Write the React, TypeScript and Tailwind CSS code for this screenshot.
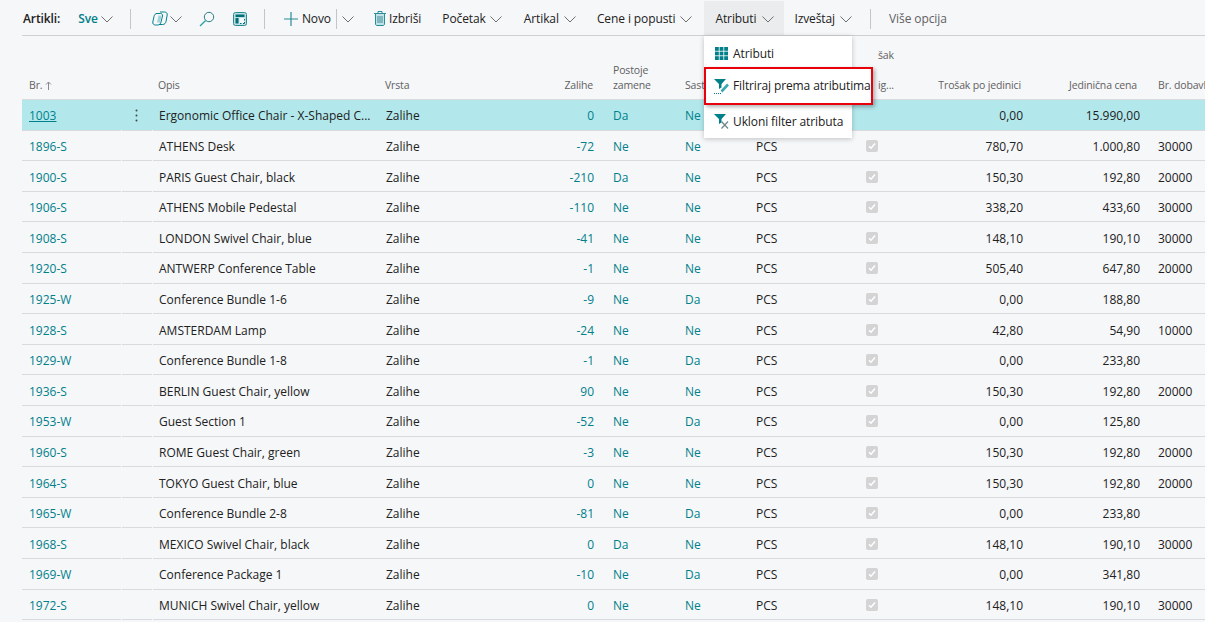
const TEAL = "text-[#00808a]";

type Item = [string, string, string, number, string, string, string, string, string];

const items: Item[] = [
  ["1003", "Ergonomic Office Chair - X-Shaped C...", "Zalihe", 0, "Da", "Ne", "", "0,00", "15.990,00"],
  ["1896-S", "ATHENS Desk", "Zalihe", -72, "Ne", "Ne", "30000", "780,70", "1.000,80"],
  ["1900-S", "PARIS Guest Chair, black", "Zalihe", -210, "Da", "Ne", "20000", "150,30", "192,80"],
  ["1906-S", "ATHENS Mobile Pedestal", "Zalihe", -110, "Ne", "Ne", "30000", "338,20", "433,60"],
  ["1908-S", "LONDON Swivel Chair, blue", "Zalihe", -41, "Ne", "Ne", "30000", "148,10", "190,10"],
  ["1920-S", "ANTWERP Conference Table", "Zalihe", -1, "Ne", "Ne", "20000", "505,40", "647,80"],
  ["1925-W", "Conference Bundle 1-6", "Zalihe", -9, "Ne", "Da", "", "0,00", "188,80"],
  ["1928-S", "AMSTERDAM Lamp", "Zalihe", -24, "Ne", "Ne", "10000", "42,80", "54,90"],
  ["1929-W", "Conference Bundle 1-8", "Zalihe", -1, "Ne", "Da", "", "0,00", "233,80"],
  ["1936-S", "BERLIN Guest Chair, yellow", "Zalihe", 90, "Ne", "Ne", "20000", "150,30", "192,80"],
  ["1953-W", "Guest Section 1", "Zalihe", -52, "Ne", "Da", "", "0,00", "125,80"],
  ["1960-S", "ROME Guest Chair, green", "Zalihe", -3, "Ne", "Ne", "20000", "150,30", "192,80"],
  ["1964-S", "TOKYO Guest Chair, blue", "Zalihe", 0, "Ne", "Ne", "20000", "150,30", "192,80"],
  ["1965-W", "Conference Bundle 2-8", "Zalihe", -81, "Ne", "Da", "", "0,00", "233,80"],
  ["1968-S", "MEXICO Swivel Chair, black", "Zalihe", 0, "Da", "Ne", "30000", "148,10", "190,10"],
  ["1969-W", "Conference Package 1", "Zalihe", -10, "Ne", "Da", "", "0,00", "341,80"],
  ["1972-S", "MUNICH Swivel Chair, yellow", "Zalihe", 0, "Ne", "Ne", "30000", "148,10", "190,10"],
];

function Chev({ className = "" }: { className?: string }) {
  return (
    <svg width="12" height="12" viewBox="0 0 12 12" fill="none" stroke="#6f6f6f" className={`shrink-0 ${className}`}>
      <path d="M0.500 3.500 6 9l5.500-5.500" />
    </svg>
  );
}

function Divider({ className = "" }: { className?: string }) {
  return <div className={`w-px h-[20px] shrink-0 bg-[#c4c5c7] ${className}`} />;
}

function CopilotIcon() {
  return (
    <svg width="16" height="16" viewBox="0 0 16 16" fill="none" stroke="#00808a" className="shrink-0">
      <path d="M5 2.500h3.500a2 2 0 0 1 2 2.500L9 11c-.4 1.800-1.500 3-3.300 3H3.500C1.700 14 .5 12.800 .8 11L2 5.500C2.400 3.600 3.500 2.500 5 2.500Z" />
      <path d="M8 1h4.500c1.800 0 3 1.200 2.700 3L14 10.500c-.4 1.800-1.500 3-3.300 3H7" />
      <path d="M6.500 4.500h3L8 11.500H5Z" fill="#9fd4d8" stroke="none" />
    </svg>
  );
}

function SearchIcon() {
  return (
    <svg width="16" height="16" viewBox="0 0 16 16" fill="none" stroke="#00808a" className="shrink-0">
      <circle cx="10" cy="6" r="4.700" stroke="#2b7f88" />
      <path d="M6.600 9.500 1 15" stroke="#2aa0aa" strokeWidth="1.300" />
    </svg>
  );
}

function LayoutIcon() {
  return (
    <svg width="14" height="14" viewBox="0 0 14 14" fill="none" className="shrink-0">
      <rect x="0.500" y="0.500" width="13" height="13" rx="2" fill="#bfe0e3" stroke="#2b8b94" />
      <rect x="2.500" y="2.500" width="9" height="2.500" fill="#00707a" />
      <rect x="2.500" y="6" width="3" height="5.500" fill="#00707a" />
      <rect x="6.500" y="6" width="5" height="5.500" fill="#f6f7f9" />
      <path d="M7 11.500h1.500M10 11.500h1.500V10M11.500 8.500V7" stroke="#00707a" />
    </svg>
  );
}

function PlusIcon() {
  return (
    <svg width="14" height="14" viewBox="0 0 14 14" stroke="#2a8c96" className="shrink-0">
      <path d="M7 0v14M0 7h14" strokeWidth="1.200" />
    </svg>
  );
}

function TrashIcon() {
  return (
    <svg width="12" height="15" viewBox="0 0 12 15" fill="none" stroke="#2a8c96" className="shrink-0">
      <path d="M0 2.500h12M4 2.500V.5h4v2" />
      <path d="M1.500 2.500h9V13c0 .8-.6 1.500-1.500 1.500H3c-.9 0-1.500-.7-1.500-1.500Z" fill="#bfe3e6" />
      <path d="M4 5v7M6 5v7M8 5v7" stroke="#3f8c94" />
    </svg>
  );
}

function GridIcon() {
  return (
    <svg width="13" height="13" viewBox="0 0 13 13" fill="#00808a" className="shrink-0">
      {[0, 4.600, 9.200].map((x) =>
        [0, 4.600, 9.200].map((y) => <rect key={`${x}-${y}`} x={x} y={y} width="3.800" height="3.800" />),
      )}
    </svg>
  );
}

function FilterEditIcon() {
  return (
    <svg width="17" height="17" viewBox="0 0 17 17" fill="none" className="shrink-0">
      <path d="M1 1h12L8.500 6V9.500L6 11V6Z" fill="#00808a" />
      <path d="M8.500 13.500 15 6.500" stroke="#3aa7b0" strokeWidth="2.600" />
      <path d="M1 15.500h7" stroke="#00808a" strokeDasharray="1 1" />
    </svg>
  );
}

function FilterClearIcon() {
  return (
    <svg width="17" height="17" viewBox="0 0 17 17" fill="none" className="shrink-0">
      <path d="M1 1h12L8.500 6V9.500L6 11V6Z" fill="#00808a" />
      <path d="M8.500 8.500l6.500 7M15 8.500l-6.500 7" stroke="#6d8a90" strokeWidth="1.300" />
    </svg>
  );
}

function Toolbar() {
  return (
    <div className="ml-[22px] mt-px h-[35px] pt-px flex items-center border-b border-[#cfd0d2] whitespace-nowrap tracking-[-0.1px]">
      <span className="ml-px font-semibold">Artikli:</span>
      <span className={`ml-[18px] font-semibold ${TEAL}`}>Sve</span>
      <Chev className="ml-[3px]" />
      <Divider className="ml-[17px]" />
      <div className="ml-[21px] flex items-center"><CopilotIcon /></div>
      <Chev className="ml-[2px]" />
      <div className="ml-[17px] flex items-center"><SearchIcon /></div>
      <div className="ml-[18px] flex items-center"><LayoutIcon /></div>
      <Divider className="ml-[17px]" />
      <div className="ml-[19px] flex items-center"><PlusIcon /></div>
      <span className="ml-[4px]">Novo</span>
      <Divider className="ml-[5px] h-[16px]" />
      <Chev className="ml-[5px]" />
      <div className="ml-[20px] flex items-center"><TrashIcon /></div>
      <span className="ml-[3px]">Izbriši</span>
      <span className="ml-[21px]">Početak</span>
      <Chev className="ml-[4px]" />
      <span className="ml-[22px]">Artikal</span>
      <Chev className="ml-[5px]" />
      <span className="ml-[21px]">Cene i popusti</span>
      <Chev className="ml-[5px]" />
      <div className="ml-[12px] w-[80px] h-[34px] -mt-px self-start bg-[#ebecee] flex items-center pl-[11px] pt-px shrink-0">
        <span>Atributi</span>
        <Chev className="ml-[6px]" />
      </div>
      <span className="ml-[10px]">Izveštaj</span>
      <Chev className="ml-[5px]" />
      <Divider className="ml-[18px]" />
      <span className="ml-[18px] text-[#616161]">Više opcija</span>
    </div>
  );
}

function HeaderRow() {
  return (
    <div className="ml-[22px] h-[64px] flex items-end pb-[6px] text-[10.5px] leading-[15px] tracking-[-0.15px] text-[#616161] border-b border-[#d9dadd] whitespace-nowrap overflow-hidden">
      <div className="w-[130px] shrink-0 pl-[7px] flex items-center gap-[3px]">
        Br.
        <svg width="7" height="9" viewBox="0 0 7 9" fill="none" stroke="#8a8a8a"><path d="M3.500 9V1M1 3.500 3.500 1 6 3.500" /></svg>
      </div>
      <div className="w-[227px] shrink-0 pl-[6px]">Opis</div>
      <div className="w-[120px] shrink-0 pl-[6px]">Vrsta</div>
      <div className="w-[107px] shrink-0 pr-[13px] text-right">Zalihe</div>
      <div className="w-[72px] shrink-0 pl-[7px]">Postoje<br />zamene</div>
      <div className="w-[71px] shrink-0 pl-[7px]">Sast</div>
      <div className="w-[111px] shrink-0" />
      <div className="w-[44px] shrink-0 pl-[18px]">šak<br /><span className="inline-block mt-[15px]">ig...</span></div>
      <div className="w-[125px] shrink-0 pr-[8px] text-right">Trošak po jedinici</div>
      <div className="w-[117px] shrink-0 pr-[9px] text-right">Jedinična cena</div>
      <div className="shrink-0 pl-[12px]">Br. dobavlj</div>
    </div>
  );
}

function Row({ item, first }: { item: Item; first: boolean }) {
  const [no, desc, type, stock, subst, bom, vendor, cost, price] = item;
  return (
    <div className={`relative ml-[22px] h-[30.6px] pt-[3.4px] flex items-center border-b border-[#d9dadd] whitespace-nowrap ${first ? "bg-[#b2e8ec]" : ""}`}>
      <div className="w-[99px] shrink-0 pl-[7px]">
        <span className={`${TEAL} ${first ? "underline" : ""}`}>{no}</span>
      </div>
      <div className="w-[31px] shrink-0 flex justify-center">
        {first && (
          <svg width="3" height="13" viewBox="0 0 3 13" fill="#444" className="-mt-px"><circle cx="1.500" cy="1.500" r="1" /><circle cx="1.500" cy="6.500" r="1" /><circle cx="1.500" cy="11.500" r="1" /></svg>
        )}
      </div>
      <div className="w-[227px] shrink-0 pl-[7px]">{desc}</div>
      <div className="w-[120px] shrink-0 pl-[7px]">{type}</div>
      <div className={`w-[107px] shrink-0 pr-[12px] text-right ${TEAL}`}>{stock}</div>
      <div className={`w-[72px] shrink-0 pl-[7px] ${TEAL}`}>{subst}</div>
      <div className={`w-[71px] shrink-0 pl-[7px] ${TEAL}`}>{bom}</div>
      <div className="w-[111px] shrink-0 pl-[7px]">{first ? "" : "PCS"}</div>
      <div className="w-[44px] shrink-0 pl-[6px] flex">
        {!first && (
          <div className="w-[12px] h-[12px] -mt-[2px] rounded-[2px] bg-[#d4d4d4] flex items-center justify-center">
            <svg width="8" height="8" viewBox="0 0 8 8" fill="none" stroke="#fff" strokeWidth="1.500"><path d="M1 4.200 3 6.200 7 1.500" /></svg>
          </div>
        )}
      </div>
      <div className="w-[125px] shrink-0 pr-[6px] text-right">{cost}</div>
      <div className="w-[117px] shrink-0 pr-[6px] text-right">{price}</div>
      <div className="shrink-0 pl-[12px]">{vendor}</div>
      <span className="absolute left-[99px] -bottom-px w-px h-px bg-[#f6f7f9]" />
      <span className="absolute left-[130px] -bottom-px w-px h-px bg-[#f6f7f9]" />
    </div>
  );
}

function AttributesMenu() {
  return (
    <div className="absolute left-[704px] top-[36px] w-[148px] h-[102px] bg-white shadow-[0_1px_5px_rgba(0,0,0,0.22)]">
      <div className="h-[34px] pl-[11px] pt-px flex items-center gap-[5px] tracking-[-0.1px]">
        <GridIcon />
        <span>Atributi</span>
      </div>
      <div className="absolute left-0 top-[31px] w-[169px] h-[38px] bg-white border-[2px] border-[#e8000b] pl-[7px] flex items-center gap-[3px] shadow-[2px_2px_4px_rgba(0,0,0,0.3)] whitespace-nowrap tracking-[-0.12px]">
        <FilterEditIcon />
        <span>Filtriraj prema atributima</span>
      </div>
      <div className="mt-[34px] h-[34px] pl-[9px] pt-px flex items-center gap-[3px] whitespace-nowrap tracking-[-0.1px]">
        <FilterClearIcon />
        <span>Ukloni filter atributa</span>
      </div>
    </div>
  );
}

export default function App() {
  return (
    <div className="relative w-[1205px] h-[622px] overflow-hidden bg-[#f6f7f9] text-[12px] text-[#212121] font-['Open_Sans','Noto_Sans',sans-serif]">
      <Toolbar />
      <HeaderRow />
      {items.map((item, i) => (
        <Row key={item[0]} item={item} first={i === 0} />
      ))}
      <AttributesMenu />
    </div>
  );
}
